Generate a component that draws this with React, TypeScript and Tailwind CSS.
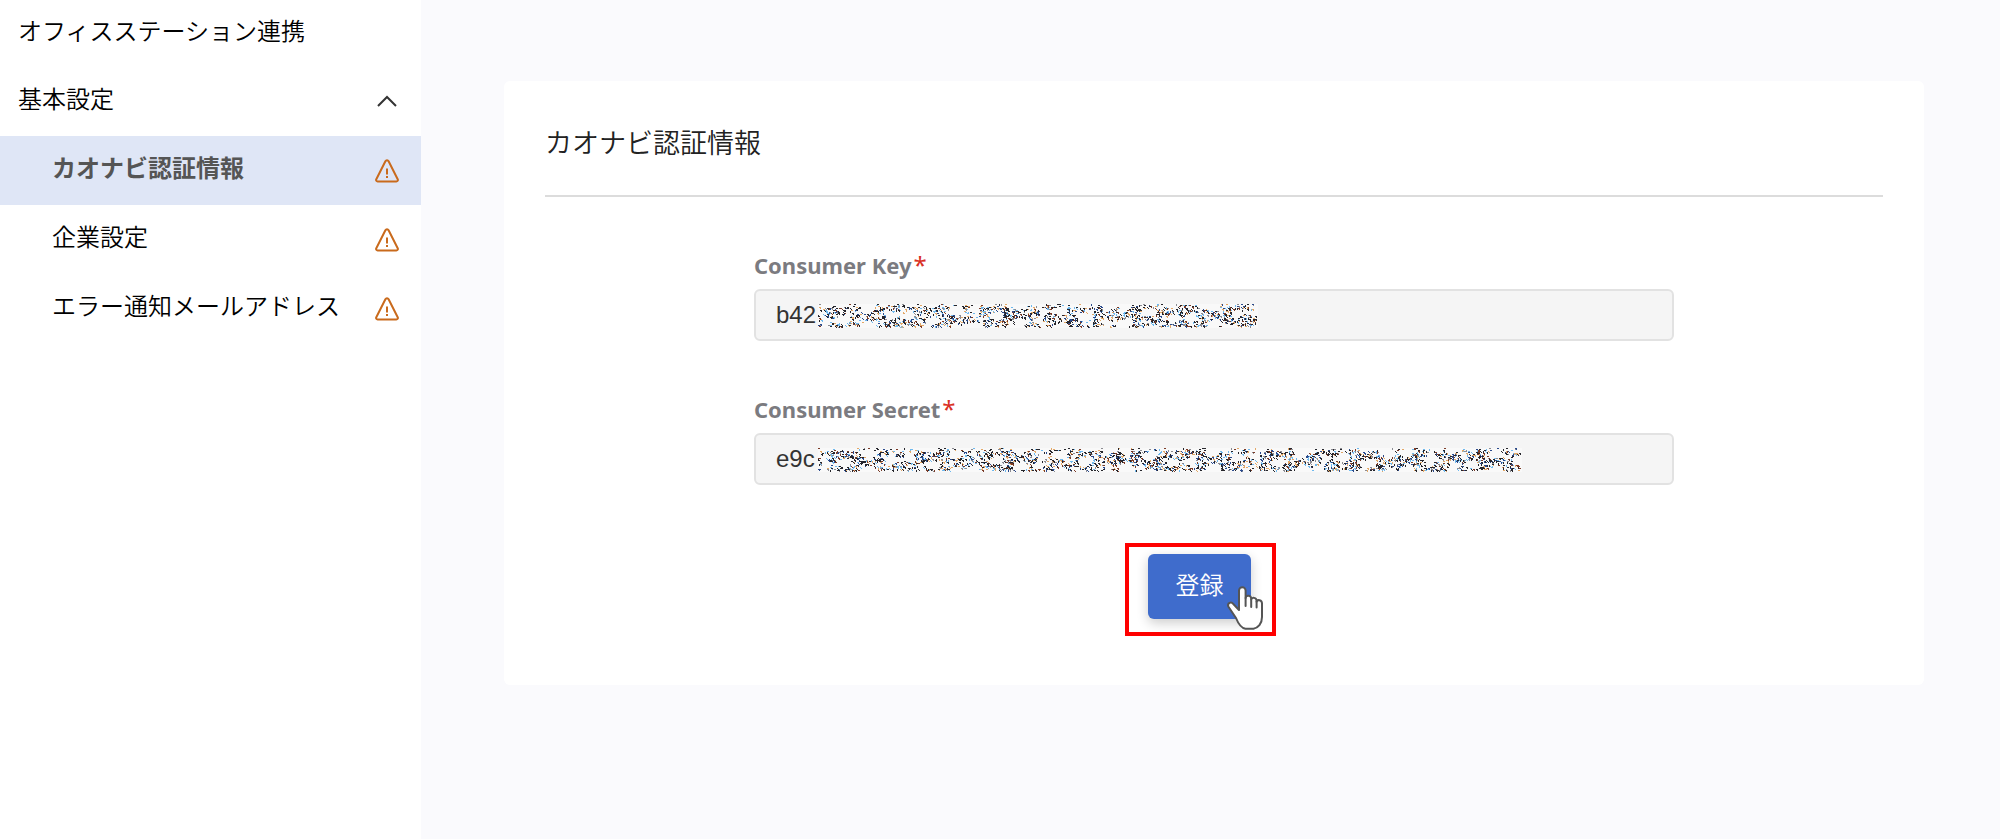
import { useId } from "react";
import clsx from "clsx";

interface NavItem {
  name: string;
  href: string;
  warning?: boolean;
}

const settingsNavigation: NavItem[] = [
  { name: "カオナビ認証情報", href: "#credentials", warning: true },
  { name: "企業設定", href: "#company", warning: true },
  { name: "エラー通知メールアドレス", href: "#notifications", warning: true },
];

const noiseColors = [
  { color: "#e3a867", density: 0.07 },
  { color: "#6fb9ee", density: 0.08 },
  { color: "#8c8c92", density: 0.04 },
  { color: "#2a4a8c", density: 0.06 },
  { color: "#7a3a26", density: 0.05 },
  { color: "#25252b", density: 0.15 },
];

// Seeded generator, so the mask looks the same on every render
function createRandom(seed: number) {
  let value = seed;
  return () => {
    value = (value * 1664525 + 1013904223) % 4294967296;
    return value / 4294967296;
  };
}

function noisePath(width: number, height: number, density: number, seed: number) {
  const random = createRandom(seed);
  const count = Math.round((width * height * density) / 2);
  let d = "";
  for (let i = 0; i < count; i++) {
    const x = Math.floor(random() * (width - 2));
    const y = Math.floor(random() * (height - 1));
    const shape = random();
    // Leave gaps, so the dots gather into streaks
    const gap = Math.sin(x * 0.13 + y * 0.35) + Math.sin(x * 0.071 - y * 0.4) + Math.sin(x * 0.29);
    if (gap > 0.8 || (y < 3 && shape > 0.5)) continue;
    if (shape < 0.35) d += `M${x} ${y}h2v1h-2z`;
    else if (shape < 0.6) d += `M${x} ${y}h1v2h-1z`;
    else if (shape < 0.8) d += `M${x} ${y}h1v1h1v1h-1v-1h-1z`;
    else d += `M${x} ${y}h2v2h-1v-1h-1z`;
  }
  return d;
}

function NoiseMask({ width }: { width: number }) {
  return (
    <svg width={width} height={24} viewBox={`0 0 ${width} 24`} aria-hidden="true">
      <rect width={width} height="24" fill="#f9f9f9" />
      {noiseColors.map((item, i) => (
        <path key={item.color} d={noisePath(width, 24, item.density, 97 + i * 7919)} fill={item.color} />
      ))}
    </svg>
  );
}

function WarningIcon() {
  return (
    <svg className="h-6 w-6 shrink-0" viewBox="0 0 24 24" fill="none" stroke="#c96a1c" aria-hidden="true">
      <path
        d="M10.4 2.2a1.8 1.8 0 0 1 3.2 0l9.1 18a1.5 1.5 0 0 1-1.4 2.2H2.7a1.5 1.5 0 0 1-1.4-2.2z"
        strokeWidth="2"
        strokeLinejoin="round"
      />
      <path d="M12 9.5v6M12 17v2" strokeWidth="2" />
    </svg>
  );
}

function HandCursor() {
  return (
    <svg width="38" height="44" viewBox="0 0 38 44" aria-hidden="true">
      <path
        d="M13 24V4.500a3.300 3.300 0 0 1 6.600 0V12c.8-3.400 5.600-2.800 5.600.8v.8c.8-2.800 5.400-2.200 5.400 1.200v.9c.8-2.600 5.400-1.800 5.400 1.800V31c0 7-4 11-8.500 11.800h-8c-5-.8-7.500-5.800-9.500-10.800L2.300 20.500c-1.300-3.500 3-5.500 5-2.500z"
        fill="#fff"
        stroke="#555"
        strokeWidth="2"
        strokeLinejoin="round"
      />
      <path d="M19.600 12v8M25.200 13.500v7.500M30.600 15.500v6" stroke="#555" strokeWidth="2" strokeLinecap="round" />
    </svg>
  );
}

function Sidebar() {
  return (
    <nav className="w-[421px] shrink-0 bg-white text-2xl font-[350] text-black">
      <a href="#top" className="flex h-[67px] items-center px-[18px] pb-2">
        オフィスステーション連携
      </a>
      <button type="button" aria-expanded="true" className="flex h-[69px] w-full items-center justify-between pr-[22px] pl-[18px]">
        <span className="pb-2">基本設定</span>
        <svg className="h-6 w-6" viewBox="0 0 24 24" fill="none" stroke="#333" strokeWidth="2" aria-hidden="true">
          <path d="M3 16l9-9 9 9" />
        </svg>
      </button>
      <ul>
        {settingsNavigation.map((item, i) => (
          <li key={item.name}>
            <a
              href={item.href}
              className={clsx(
                "flex h-[69px] items-center justify-between pr-[22px] pl-[52px]",
                i === 0 && "bg-[#dfe6f6] font-bold text-[#555]"
              )}
            >
              <span className="pb-2">{item.name}</span>
              {item.warning && <WarningIcon />}
            </a>
          </li>
        ))}
      </ul>
    </nav>
  );
}

function SecretField({ label, value, maskWidth }: { label: string; value: string; maskWidth: number }) {
  const id = useId();
  return (
    <div>
      <label htmlFor={id} className="mb-2 flex h-8 items-center gap-0.5 font-['Noto_Sans'] text-[22px] font-bold text-[#7b7b80]">
        {label}
        <span className="text-2xl font-normal text-[#d93025]">*</span>
      </label>
      <div className="relative">
        <input
          id={id}
          type="text"
          defaultValue={value}
          className="block h-[52px] w-full rounded-md border-2 border-[#e2e2e2] bg-[#f5f5f5] px-5 font-['Liberation_Sans'] text-2xl text-[#333] outline-none"
        />
        <div className="pointer-events-none absolute top-[15px] left-16">
          <NoiseMask width={maskWidth} />
        </div>
      </div>
    </div>
  );
}

export default function App() {
  return (
    <div className="flex min-h-screen bg-[#fafafd] font-['Noto_Sans_CJK_JP',sans-serif]">
      <Sidebar />
      <main className="min-w-0 flex-1 pt-[81px] pr-[76px] pb-20 pl-[83px]">
        <section className="rounded-md bg-white px-[41px] pt-[41px] pb-[49px]">
          <h1 className="border-b-2 border-[#dcdcdc] pb-[33px] text-[27px] leading-10 font-[350] text-[#222]">
            カオナビ認証情報
          </h1>
          <form className="pt-[52px]" onSubmit={(e) => e.preventDefault()}>
            <div className="mx-auto flex max-w-[920px] flex-col gap-[52px]">
              <SecretField label="Consumer Key" value="b42" maskWidth={440} />
              <SecretField label="Consumer Secret" value="e9c" maskWidth={704} />
            </div>
            <div className="flex justify-center pt-[58px] pr-[27px]">
              <div className="relative border-4 border-[#ff0000] pt-[7px] pr-[21px] pb-[13px] pl-[19px]">
                <button
                  type="submit"
                  className="block h-[65px] w-[103px] rounded-md bg-[#3f6ccc] pb-1.5 text-2xl font-[350] text-white shadow-[0_4px_12px_rgba(0,0,0,0.2)]"
                >
                  登録
                </button>
                <div className="pointer-events-none absolute right-2 bottom-0.5">
                  <HandCursor />
                </div>
              </div>
            </div>
          </form>
        </section>
      </main>
    </div>
  );
}
